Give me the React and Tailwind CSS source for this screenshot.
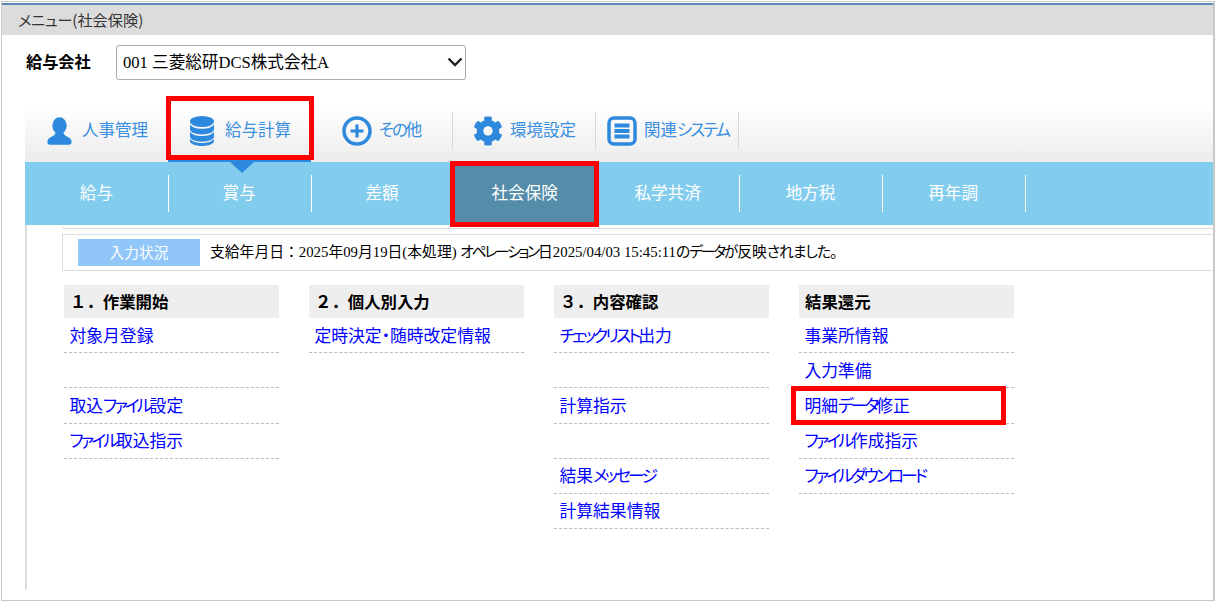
import { FaCog } from "react-icons/fa";

const sans = "font-['Noto_Sans_CJK_JP','Noto_Sans',sans-serif]";
const palt = "[font-feature-settings:'palt']";

// the original font has condensed kana, so kana runs get pulled together
const Squeezed = ({ text, kata = "tracking-[-2.9px]", hira = "" }) =>
  text.split(/([ァ-ヶー]+|[ぁ-ん]+)/).map((part, i) => {
    if (i % 2 === 0) return part;
    const cls = /[ァ-ヶー]/.test(part) ? kata : hira;
    return (
      <span key={i} className={`${cls} ${palt}`}>
        {part}
      </span>
    );
  });

const UserIcon = () => (
  <svg width="25" height="28" viewBox="0 0 25 28" fill="currentColor">
    <ellipse cx="12.5" cy="8.6" rx="7.2" ry="8.4" />
    <path d="M8.5 15.5c-.2 2.4-2.2 3.4-4.4 4.4C1.8 21 .4 22.600.4 25.200c0 1.600 1 2.500 2.600 2.500h19c1.600 0 2.600-.9 2.600-2.500 0-2.600-1.400-4.200-3.700-5.300-2.200-1-4.200-2-4.400-4.400z" />
  </svg>
);

const DatabaseIcon = () => (
  <svg width="24" height="30" viewBox="0 0 24 30" fill="currentColor">
    <ellipse cx="12" cy="5.500" rx="12" ry="5.500" />
    <path d="M0 8.500c1.500 2.800 6.500 4.300 12 4.300s10.500-1.500 12-4.300v4.800c0 3-5.400 5.200-12 5.200S0 16.300 0 13.300z" />
    <path d="M0 15.800c1.500 2.800 6.500 4.300 12 4.300s10.500-1.500 12-4.300v4.800c0 3-5.400 5.200-12 5.200S0 23.600 0 20.600z" />
    <path d="M0 22.800c1.500 2.800 6.500 4.200 12 4.200s10.500-1.400 12-4.200v2.200c0 2.800-5.400 5-12 5S0 27.800 0 25z" />
  </svg>
);

const CircleIcon = () => (
  <svg width="30" height="30" viewBox="0 0 30 30">
    <circle cx="15" cy="15" r="13" fill="none" stroke="currentColor" strokeWidth="3.5" />
    <path d="M15 8.500v13M8.500 15h13" stroke="currentColor" strokeWidth="3.2" />
  </svg>
);

const ListIcon = () => (
  <svg width="30" height="30" viewBox="0 0 30 30">
    <rect x="2" y="2" width="26" height="26" rx="5" fill="none" stroke="currentColor" strokeWidth="3.5" />
    <path d="M7.500 9.500h15M7.500 15h15M7.500 20.500h15" stroke="currentColor" strokeWidth="3.8" />
  </svg>
);

const tools = [
  { label: "人事管理", icon: <UserIcon />, w: "w-[143px]", pl: "pl-[22px]", gap: "gap-[10px]" },
  { label: "給与計算", icon: <DatabaseIcon />, w: "w-[143px]", pl: "pl-[22px]", gap: "gap-[11px]" },
  { label: "その他", icon: <CircleIcon />, w: "w-[142px]", pl: "pl-[31px]", gap: "gap-[7px]", sep: true },
  { label: "環境設定", icon: <FaCog size={30} />, w: "w-[143px]", pl: "pl-[20px]", gap: "gap-[7px]", sep: true },
  { label: "関連システム", icon: <ListIcon />, w: "w-[143px]", pl: "pl-[11px]", gap: "gap-[7px]", sep: true },
];

const tabs = ["給与", "賞与", "差額", "社会保険", "私学共済", "地方税", "再年調"];

const columns = [
  { title: "１．作業開始", items: ["対象月登録", "", "取込ファイル設定", "ファイル取込指示"] },
  { title: "２．個人別入力", items: ["定時決定・随時改定情報"] },
  { title: "３．内容確認", items: ["チェックリスト出力", "", "計算指示", "", "結果メッセージ", "計算結果情報"] },
  { title: "結果還元", items: ["事業所情報", "入力準備", "明細データ修正", "ファイル作成指示", "ファイルダウンロード"] },
];

export default function App() {
  return (
    <div className={`relative w-[1216px] h-[602px] bg-white p-px overflow-hidden ${sans}`}>
      <div className="h-full border border-[#c8c8c8] border-r-2 flex flex-col">
        <div className="mt-px h-[32px] border-t-2 border-[#5b86b8] bg-[#dcdcdc] pl-[16px] text-[15.2px] leading-[28px] text-[#333]">
          <Squeezed text="メニュー(社会保険)" kata="tracking-[-0.2px]" />
        </div>

        <div className="flex items-center pl-[24px] mt-[10px] h-[35px]">
          <span className="w-[90px] text-[16.2px] font-bold text-black -mt-[3px]">給与会社</span>
          <div className="relative">
            <select className="block appearance-none w-[350px] h-[35px] bg-white border border-[#aaa] rounded-[3px] pl-[6px] pt-px text-[16.6px] text-black font-['Liberation_Serif','Noto_Sans_CJK_JP',serif]">
              <option>001 三菱総研DCS株式会社A</option>
            </select>
            <svg width="16" height="10" viewBox="0 0 16 10" className="absolute right-[3px] top-[12px] pointer-events-none">
              <path d="M1.500 1.500 8 8l6.500-6.500" fill="none" stroke="#222" strokeWidth="2.4" />
            </svg>
          </div>
        </div>

        <div className="ml-[23px] mt-[16px] flex flex-col flex-1 mb-[10px]">
          <div className="h-[66px] flex bg-gradient-to-b from-white from-[15%] to-[#ececec] shrink-0 text-[16.5px]">
            {tools.map((t) => (
              <div
                key={t.label}
                className={`relative ${t.w} ${t.pl} ${t.gap} flex items-center pt-[4px] text-[#2d89dd]`}
              >
                {t.icon}
                <span className="text-[#3a8fe0] -mt-[3px]">
                  <Squeezed text={t.label} kata="tracking-[-2px]" hira="tracking-[-2px]" />
                </span>
                {t.sep && <span className="absolute right-0 top-[16px] h-[38px] w-px bg-[#d8d8d8]" />}
                {t.label === "給与計算" && (
                  <>
                    <span className="absolute left-0 right-0 bottom-0 h-[2px] bg-[#2d89dd]" />
                    <span className="absolute left-[62px] top-[66px] z-10 border-x-[12px] border-x-transparent border-t-[11px] border-t-[#2d89dd]" />
                  </>
                )}
              </div>
            ))}
          </div>

          <div className="h-[63px] flex items-center bg-[#82cdee] shrink-0">
            {tabs.map((t) => (
              <div
                key={t}
                className={`w-[142.8px] h-full flex items-center justify-center pb-[2px] text-white text-[16.6px] ${t === "社会保険" ? "bg-[#548caa]" : ""}`}
              >
                {t}
              </div>
            )).flatMap((el, i) => [
              el,
              <span key={i} className="w-px h-[37px] bg-white -mr-px shrink-0" />,
            ])}
          </div>

          <div className="flex-1 border-l-2 border-[#dddddd] pt-[3px] pl-[35px]">
            <div className="border-t border-[#dddddd]" />
            <div className="mt-[5px] h-[37px] border border-r-0 border-[#dddddd] flex items-center pl-[15px]">
              <span className="w-[122px] h-[27px] bg-[#90c6f8] text-white text-[14.7px] flex items-center justify-center">入力状況</span>
              <span className="ml-[10px] text-[14.8px] text-black font-['Liberation_Serif','Noto_Sans_CJK_JP',serif]">
                <Squeezed
                  text="支給年月日：2025年09月19日(本処理) オペレーション日2025/04/03 15:45:11のデータが反映されました。"
                  kata="tracking-[-2.3px]"
                  hira="tracking-[-1px]"
                />
              </span>
            </div>

            <div className="ml-[2px] mt-[14px] flex gap-[30px]">
              {columns.map((c) => (
                <div key={c.title} className="w-[215px]">
                  <div className="h-[33px] bg-[#eeeeee] px-[6px] flex items-center text-[16.4px] font-bold text-black">{c.title}</div>
                  {c.items.map((item, i) => (
                    <div
                      key={i}
                      className={`h-[35.2px] border-b border-dashed border-[#bbb] px-[5.5px] flex items-center text-[16.8px] text-[#0000ff] ${palt}`}
                    >
                      <span>
                        <Squeezed text={item} />
                      </span>
                    </div>
                  ))}
                </div>
              ))}
            </div>
          </div>
        </div>
      </div>

      <div className="absolute left-[166px] top-[96px] w-[148px] h-[64px] border-[5px] border-[#ff0000] z-20" />
      <div className="absolute left-[450px] top-[161px] w-[149px] h-[66px] border-[5px] border-[#ff0000] z-20" />
      <div className="absolute left-[791px] top-[386px] w-[215px] h-[39px] border-[5px] border-[#ff0000] z-20" />
    </div>
  );
}
